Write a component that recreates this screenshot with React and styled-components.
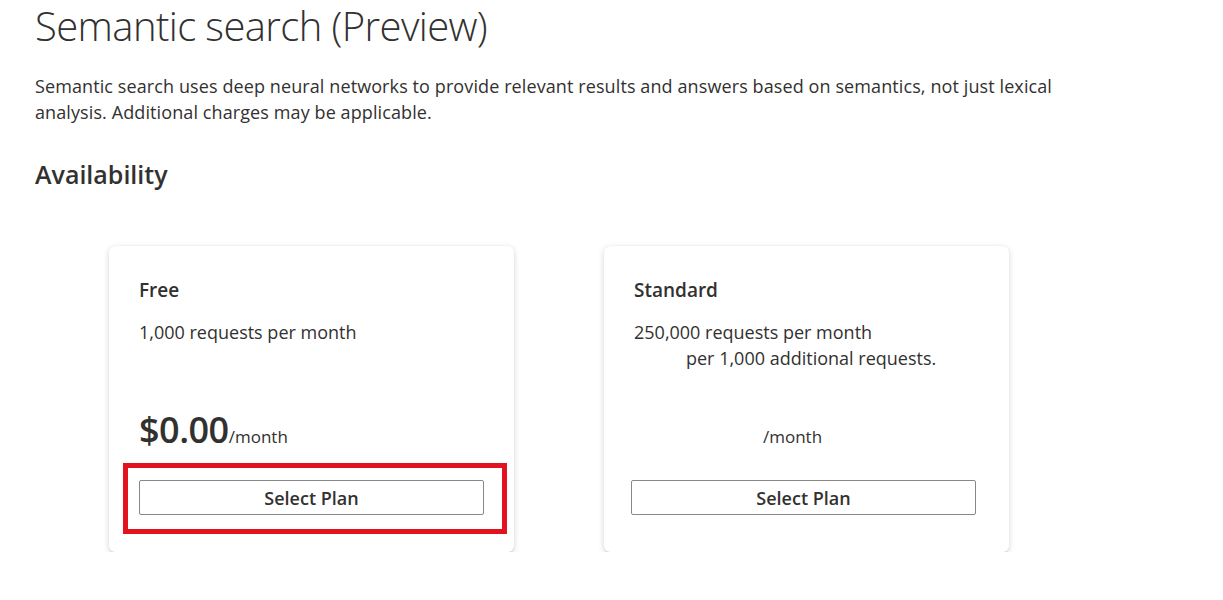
import React from "react";
import styled, { createGlobalStyle } from "styled-components";

const GlobalStyle = createGlobalStyle`
  body {
    margin: 0;
    background: #ffffff;
    font-family: "Open Sans", "Noto Sans", sans-serif;
    color: #323130;
  }
`;

const Page = styled.div`
  padding: 0 35px;
  width: 1223px;
  box-sizing: border-box;
`;

const Title = styled.h1`
  margin: 0;
  padding-top: 1px;
  font-size: 40px;
  font-weight: 300;
  line-height: 50px;
  letter-spacing: -0.6px;
`;

const Description = styled.p`
  margin: 22px 0 0;
  font-size: 18px;
  line-height: 26px;
  letter-spacing: 0.1px;
  max-width: 1060px;
`;

const SectionTitle = styled.h2`
  margin: 33px 0 0;
  font-size: 25px;
  font-weight: 600;
  line-height: 32px;
`;

const Cards = styled.div`
  display: flex;
  gap: 90px;
  margin: 56px 0 0 74px;
`;

const Card = styled.div`
  position: relative;
  width: 405px;
  height: 306px;
  box-sizing: border-box;
  padding: 32px 30px 37px;
  border-radius: 6px;
  background: #fff;
  box-shadow: 0 2px 6px rgba(0, 0, 0, 0.16), 0 0.3px 1px rgba(0, 0, 0, 0.1);
  display: flex;
  flex-direction: column;
`;

const PlanName = styled.div`
  font-size: 19px;
  font-weight: 600;
  line-height: 24px;
`;

const PlanLine = styled.div`
  margin-top: ${(p) => (p.$first ? "17px" : "0")};
  padding-left: ${(p) => p.$indent || 0}px;
  font-size: 18px;
  line-height: 26px;
`;

/* block with the big font size, so "/month" sits on the same baseline with or without an amount */
const PriceRow = styled.div`
  margin-top: auto;
  padding-left: ${(p) => p.$indent || 0}px;
  height: 48px;
  font-size: 36px;
  line-height: 48px;
  white-space: nowrap;
`;

const Amount = styled.span`
  font-weight: 600;
  letter-spacing: -0.5px;
`;

const Per = styled.span`
  font-size: 17px;
`;

const SelectButton = styled.button`
  display: block;
  margin: 26px 0 0 ${(p) => p.$shift || 0}px;
  width: 345px;
  height: 35px;
  padding: 0;
  background: #fff;
  border: 1px solid #8a8886;
  border-radius: 2px;
  font-family: inherit;
  font-size: 18px;
  font-weight: 600;
  color: #323130;
  cursor: pointer;
`;

/* annotation drawn over the card in the screenshot */
const Highlight = styled.div`
  position: absolute;
  left: 14px;
  top: 217px;
  width: 384px;
  height: 71px;
  box-sizing: border-box;
  border: 5px solid #e3121f;
  pointer-events: none;
`;

const plans = [
  {
    name: "Free",
    lines: [{ text: "1,000 requests per month" }],
    amount: "$0.00",
    highlight: true,
  },
  {
    name: "Standard",
    lines: [
      { text: "250,000 requests per month" },
      { text: "per 1,000 additional requests.", indent: 52 },
    ],
    amount: "",
    priceIndent: 129,
    buttonShift: -3,
  },
];

export default function App() {
  return (
    <Page>
      <GlobalStyle />
      <Title>Semantic search (Preview)</Title>
      <Description>
        Semantic search uses deep neural networks to provide relevant results and answers based on
        semantics, not just lexical analysis. Additional charges may be applicable.
      </Description>
      <SectionTitle>Availability</SectionTitle>
      <Cards>
        {plans.map((plan) => (
          <Card key={plan.name}>
            <PlanName>{plan.name}</PlanName>
            {plan.lines.map((line, i) => (
              <PlanLine key={i} $first={i === 0} $indent={line.indent}>
                {line.text}
              </PlanLine>
            ))}
            <PriceRow $indent={plan.priceIndent}>
              {plan.amount && <Amount>{plan.amount}</Amount>}
              <Per>/month</Per>
            </PriceRow>
            <SelectButton $shift={plan.buttonShift}>Select Plan</SelectButton>
            {plan.highlight && <Highlight />}
          </Card>
        ))}
      </Cards>
    </Page>
  );
}
